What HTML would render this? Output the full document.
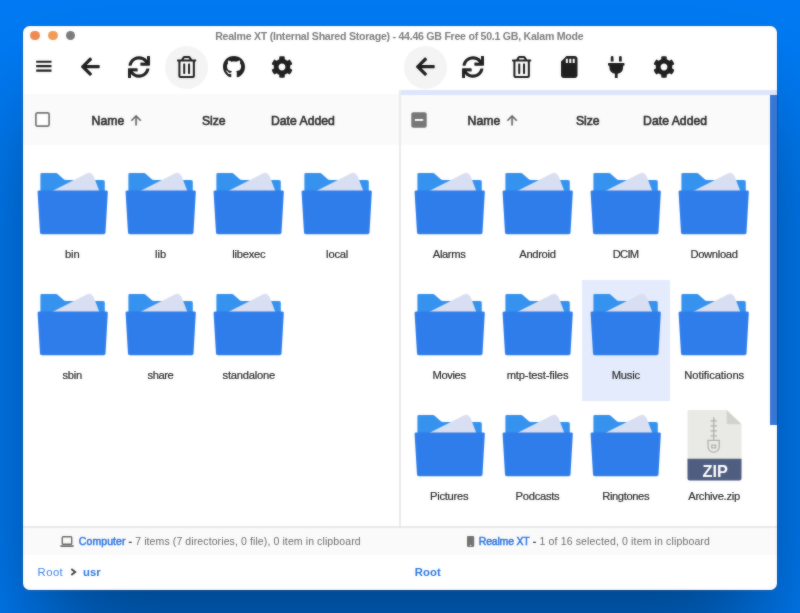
<!DOCTYPE html>
<html lang="en">
<head>
<meta charset="utf-8">
<title>Realme XT (Internal Shared Storage)</title>
<style>
*{box-sizing:border-box;margin:0;padding:0}
html,body{width:800px;height:613px;overflow:hidden}
body{position:relative;font-family:"Liberation Sans",sans-serif;background:#007af3;color:#333}
.win{position:absolute;left:22.9px;top:25.9px;width:753.65px;height:564.35px;background:#fff;border-radius:6.5px;box-shadow:0 71px 102px -11px rgba(0,0,0,.44),0 0 0 .6px rgba(0,20,60,.3)}
.abs, .ic, .circ, .sel, .lbl, .t{position:absolute}
.win>*{position:absolute}
.ic{display:block;overflow:visible}
.circ{width:43px;height:43px;border-radius:50%;background:#f4f4f4}
.sel{width:88.1px;height:121.2px;background:#e4ebfc}
.lbl{width:120px;text-align:center;font-size:11.2px;line-height:14px;color:#2d2d2d;white-space:nowrap;-webkit-text-stroke:.2px #2d2d2d}
.t{white-space:nowrap;line-height:1}
#stage{position:absolute;left:0;top:0;width:800px;height:613px;will-change:transform;filter:url(#soft)}
.dot{position:absolute;width:9.8px;height:9.8px;border-radius:50%;top:30.7px}
.title{position:absolute;top:30px;font-size:10.6px;font-weight:bold;color:#7e7e7e;line-height:12px;white-space:nowrap}
.hdr{position:absolute;background:#fafafa}
.hl{position:absolute;font-size:12.2px;color:#2e2e2e;line-height:14px;top:113.5px;white-space:nowrap;-webkit-text-stroke:.6px #2e2e2e}
.sb{position:absolute;top:525.8px;height:29.1px;background:#fafafa;border-top:2px solid #e9e9e9}
.st{position:absolute;top:535px;font-size:10.5px;line-height:13px;color:#6e6e6e;white-space:nowrap}
.st i{font-style:normal;color:#3c3c3c;-webkit-text-stroke:.4px #3c3c3c}
.st b{color:#3379e0;font-weight:normal;-webkit-text-stroke:.5px #3379e0}
.bc{position:absolute;top:564.6px;font-size:11.3px;line-height:14px;color:#3f85e4;white-space:nowrap}
.bc.b{font-weight:bold;color:#2f78e0}
</style>
</head>
<body>
<svg width="0" height="0" style="position:absolute" aria-hidden="true"><filter id="soft" x="0" y="0" width="100%" height="100%" color-interpolation-filters="sRGB"><feGaussianBlur in="SourceGraphic" stdDeviation="1" result="b"/><feComposite in="SourceGraphic" in2="b" operator="arithmetic" k1="0" k2="0.58" k3="0.42" k4="0"/></filter></svg>
<div id="stage">
<div class="win"></div>
<div class="dot" style="left:30.14px;background:#ee8a50"></div>
<div class="dot" style="left:47.82px;background:#f19b55"></div>
<div class="dot" style="left:65.5px;background:#797c7a"></div>
<div class="title" style="left:215.2px;"><span style="letter-spacing:-0.259px;margin-right:0.259px;">Realme XT (Internal Shared Storage) - 44.46 GB Free of 50.1 GB, Kalam Mode</span></div>

<div class="hdr" style="left:22.9px;width:376.3px;top:93.6px;height:51.6px"></div>
<div class="hdr" style="left:401px;width:368.6px;top:94.9px;height:50.3px"></div>
<div class="abs" style="left:399.4px;top:89.9px;width:377.15px;height:5px;background:#dce5fb"></div>
<div class="abs" style="left:399px;top:90px;width:2.1px;height:437px;background:#ebebeb"></div>
<div class="abs" style="left:769.5px;top:94.9px;width:7.05px;height:329.8px;background:#3876d3"></div>

<svg class="ic" style="left:34.6px;top:112.1px" width="15" height="15" viewBox="0 0 15 15"><rect x=".9" y=".9" width="13.2" height="13.2" rx="1.5" fill="#fff" stroke="#757575" stroke-width="1.7"/></svg>
<div class="hl" style="left:91.6px;"><span style="letter-spacing:0.071px;margin-right:-0.071px;">Name</span></div>
<svg class="ic" style="left:130.7px;top:115.2px" width="10.2" height="10.2" viewBox="4 4 16 16"><path fill="#666" stroke="#666" stroke-width=".7" d="M13 20h-2V8l-5.500 5.500-1.420-1.420L12 4.160l7.920 7.920-1.420 1.420L13 8z"/></svg>
<div class="hl" style="left:201.9px;"><span style="letter-spacing:-0.030px;margin-right:0.030px;">Size</span></div>
<div class="hl" style="left:270.9px;"><span style="letter-spacing:0.030px;margin-right:-0.030px;">Date Added</span></div>

<svg class="ic" style="left:411px;top:112px" width="16" height="16" viewBox="0 0 16 16"><rect x=".3" y=".3" width="15.400" height="15.400" rx="2" fill="#767676"/><rect x="3.800" y="7" width="8.400" height="1.900" fill="#fff"/></svg>
<div class="hl" style="left:467.6px;"><span style="letter-spacing:0.071px;margin-right:-0.071px;">Name</span></div>
<svg class="ic" style="left:506.7px;top:115.2px" width="10.2" height="10.2" viewBox="4 4 16 16"><path fill="#666" stroke="#666" stroke-width=".7" d="M13 20h-2V8l-5.500 5.500-1.420-1.420L12 4.160l7.920 7.920-1.420 1.420L13 8z"/></svg>
<div class="hl" style="left:575.9px;"><span style="letter-spacing:-0.030px;margin-right:0.030px;">Size</span></div>
<div class="hl" style="left:643.1px;"><span style="letter-spacing:0.030px;margin-right:-0.030px;">Date Added</span></div>

<svg class="ic" style="left:36.00px;top:60.30px" width="16" height="12" viewBox="0 0 16 12" preserveAspectRatio="none" ><path d="M.2 1.650h15.300M.2 6.100h15.300M.2 10.600h15.300" stroke="#1c1c1c" stroke-width="2.050" fill="none"/></svg>
<div class="circ" style="left:164.9px;top:45.7px"></div>
<svg class="ic" style="left:81.19px;top:56.00px" width="18.72" height="21.4" viewBox="0 0 448 512" preserveAspectRatio="none" ><path fill="#1f1f1f" d="M257.5 445.1l-22.2 22.2c-9.4 9.4-24.6 9.4-33.9 0L7 273c-9.4-9.4-9.4-24.6 0-33.9L201.4 44.7c9.4-9.4 24.6-9.4 33.9 0l22.2 22.2c9.5 9.5 9.3 25-.4 34.3L136.6 216H424c13.3 0 24 10.7 24 24v32c0 13.3-10.7 24-24 24H136.6l120.5 114.8c9.8 9.3 10 24.8.4 34.3z"/></svg>
<svg class="ic" style="left:127.60px;top:55.70px" width="22.0" height="22.0" viewBox="0 0 512 512" preserveAspectRatio="none" ><path fill="#1f1f1f" d="M440.65 12.57l4 82.77A247.16 247.16 0 0 0 255.83 8C134.73 8 33.91 94.92 12.29 209.82A12 12 0 0 0 24.09 224h49.05a12 12 0 0 0 11.67-9.26 175.91 175.91 0 0 1 317-56.94l-101.46-4.86a12 12 0 0 0-12.57 12v47.41a12 12 0 0 0 12 12H500a12 12 0 0 0 12-12V12a12 12 0 0 0-12-12h-47.37a12 12 0 0 0-11.98 12.57zM255.83 432a175.61 175.61 0 0 1-146-77.8l101.8 4.87a12 12 0 0 0 12.57-12v-47.4a12 12 0 0 0-12-12H12a12 12 0 0 0-12 12V500a12 12 0 0 0 12 12h47.35a12 12 0 0 0 12-12.6l-4.15-82.57A247.17 247.17 0 0 0 255.83 504c121.11 0 221.93-86.92 243.55-201.82a12 12 0 0 0-11.8-14.18h-49.05a12 12 0 0 0-11.67 9.26A175.86 175.86 0 0 1 255.83 432z"/></svg>
<svg class="ic" style="left:176.82px;top:55.70px" width="19.25" height="22.0" viewBox="0 0 448 512" preserveAspectRatio="none" ><path fill="#fdfdfd" d="M60 124h328v344H60z"/><path fill="#1f1f1f" d="M268 416h24a12 12 0 0 0 12-12V188a12 12 0 0 0-12-12h-24a12 12 0 0 0-12 12v216a12 12 0 0 0 12 12zM432 80h-82.410l-34-56.700A48 48 0 0 0 274.410 0H173.590a48 48 0 0 0-41.160 23.300L98.410 80H16A16 16 0 0 0 0 96v16a16 16 0 0 0 16 16h16v336a48 48 0 0 0 48 48h288a48 48 0 0 0 48-48V128h16a16 16 0 0 0 16-16V96a16 16 0 0 0-16-16zM171.840 50.910A6 6 0 0 1 177 48h94a6 6 0 0 1 5.150 2.910L293.610 80H154.390zM368 464H80V128h288zm-212-48h24a12 12 0 0 0 12-12V188a12 12 0 0 0-12-12h-24a12 12 0 0 0-12 12v216a12 12 0 0 0 12 12z"/></svg>
<svg class="ic" style="left:223.20px;top:55.80px" width="22" height="21.4" viewBox="8 8 496 484" preserveAspectRatio="none" ><path fill="#1f1f1f" d="M173.9 397.4c0 2-2.3 3.6-5.2 3.6-3.3.3-5.6-1.3-5.6-3.6 0-2 2.3-3.6 5.2-3.6 3-.3 5.6 1.3 5.6 3.6m-31.1-4.5c-.7 2 1.3 4.3 4.3 4.9 2.6 1 5.6 0 6.2-2s-1.3-4.3-4.3-5.2c-2.6-.7-5.5.3-6.2 2.3m44.2-1.7c-2.9.7-4.9 2.6-4.6 4.9.3 2 2.9 3.3 5.9 2.6 2.9-.7 4.9-2.6 4.6-4.6-.3-1.9-3-3.2-5.9-2.9M252.8 8C114.1 8 8 113.3 8 252c0 110.9 69.8 205.8 169.5 239.2 12.8 2.3 17.3-5.6 17.3-12.1 0-6.2-.3-40.4-.3-61.4 0 0-70 15-84.7-29.8 0 0-11.4-29.1-27.8-36.6 0 0-22.9-15.7 1.6-15.4 0 0 24.9 2 38.6 25.8 21.9 38.6 58.6 27.5 72.9 20.9 2.3-16 8.8-27.1 16-33.7-55.9-6.2-112.3-14.3-112.3-110.5 0-27.5 7.6-41.3 23.6-58.9-2.6-6.5-11.1-33.3 2.6-67.9 20.9-6.5 69 27 69 27 20-5.6 41.5-8.5 62.8-8.5s42.8 2.9 62.8 8.5c0 0 48.1-33.6 69-27 13.7 34.7 5.2 61.4 2.6 67.9 16 17.7 25.8 31.5 25.8 58.9 0 96.5-58.9 104.2-114.8 110.5 9.2 7.9 17 22.9 17 46.4 0 33.7-.3 75.4-.3 83.6 0 6.5 4.6 14.4 17.3 12.1C436.2 457.8 504 362.9 504 252 504 113.3 391.5 8 252.8 8M105.2 352.9c-1.3 1-1 3.3.7 5.2 1.6 1.6 3.9 2.3 5.2 1 1.3-1 1-3.3-.7-5.2-1.6-1.6-3.9-2.3-5.2-1m-10.8-8.1c-.7 1.3.3 2.9 2.3 3.9 1.6 1 3.6.7 4.3-.7.7-1.3-.3-2.9-2.3-3.9-2-.6-3.6-.3-4.3.7m32.4 35.6c-1.6 1.3-1 4.3 1.3 6.2 2.3 2.3 5.2 2.6 6.5 1 1.3-1.3.7-4.3-1.3-6.2-2.2-2.3-5.2-2.6-6.5-1m-11.4-14.7c-1.6 1-1.6 3.6 0 5.9s4.3 3.3 5.6 2.3c1.6-1.3 1.6-3.9 0-6.2-1.4-2.3-4-3.3-5.6-2"/></svg>
<svg class="ic" style="left:270.90px;top:56.00px" width="22.0" height="22.0" viewBox="0 0 512 512" preserveAspectRatio="none" ><path fill="#1f1f1f" d="M487.4 315.7l-42.6-24.6c4.3-23.2 4.3-47 0-70.2l42.6-24.6c4.9-2.8 7.1-8.6 5.5-14-11.1-35.6-30-67.8-54.7-94.6-3.8-4.1-10-5.1-14.8-2.3L380.8 110c-17.9-15.4-38.5-27.3-60.8-35.1V25.8c0-5.6-3.9-10.5-9.4-11.7-36.7-8.2-74.3-7.8-109.2 0-5.5 1.2-9.4 6.1-9.4 11.7V75c-22.2 7.9-42.8 19.8-60.8 35.1L88.7 85.5c-4.9-2.8-11-1.9-14.8 2.3-24.7 26.7-43.6 58.9-54.7 94.6-1.7 5.4.6 11.2 5.5 14L67.3 221c-4.3 23.2-4.3 47 0 70.2l-42.6 24.6c-4.9 2.8-7.1 8.6-5.5 14 11.1 35.6 30 67.8 54.7 94.6 3.8 4.1 10 5.1 14.8 2.3l42.6-24.6c17.9 15.4 38.5 27.3 60.8 35.1v49.2c0 5.6 3.9 10.5 9.4 11.7 36.7 8.2 74.3 7.8 109.2 0 5.5-1.2 9.4-6.1 9.4-11.7v-49.2c22.2-7.9 42.8-19.8 60.8-35.1l42.6 24.6c4.9 2.8 11 1.9 14.8-2.3 24.7-26.7 43.6-58.9 54.7-94.6 1.5-5.5-.7-11.3-5.6-14.1zM256 336c-44.1 0-80-35.9-80-80s35.9-80 80-80 80 35.9 80 80-35.9 80-80 80z"/></svg>
<div class="circ" style="left:404.1px;top:45.7px"></div>
<svg class="ic" style="left:415.99px;top:56.00px" width="18.72" height="21.4" viewBox="0 0 448 512" preserveAspectRatio="none" ><path fill="#1f1f1f" d="M257.5 445.1l-22.2 22.2c-9.4 9.4-24.6 9.4-33.9 0L7 273c-9.4-9.4-9.4-24.6 0-33.9L201.4 44.7c9.4-9.4 24.6-9.4 33.9 0l22.2 22.2c9.5 9.5 9.3 25-.4 34.3L136.6 216H424c13.3 0 24 10.7 24 24v32c0 13.3-10.7 24-24 24H136.6l120.5 114.8c9.8 9.3 10 24.8.4 34.3z"/></svg>
<svg class="ic" style="left:462.20px;top:55.70px" width="22.0" height="22.0" viewBox="0 0 512 512" preserveAspectRatio="none" ><path fill="#1f1f1f" d="M440.65 12.57l4 82.77A247.16 247.16 0 0 0 255.83 8C134.73 8 33.91 94.92 12.29 209.82A12 12 0 0 0 24.09 224h49.05a12 12 0 0 0 11.67-9.26 175.91 175.91 0 0 1 317-56.94l-101.46-4.86a12 12 0 0 0-12.57 12v47.41a12 12 0 0 0 12 12H500a12 12 0 0 0 12-12V12a12 12 0 0 0-12-12h-47.37a12 12 0 0 0-11.98 12.57zM255.83 432a175.61 175.61 0 0 1-146-77.8l101.8 4.87a12 12 0 0 0 12.57-12v-47.4a12 12 0 0 0-12-12H12a12 12 0 0 0-12 12V500a12 12 0 0 0 12 12h47.35a12 12 0 0 0 12-12.6l-4.15-82.57A247.17 247.17 0 0 0 255.83 504c121.11 0 221.93-86.92 243.55-201.82a12 12 0 0 0-11.8-14.18h-49.05a12 12 0 0 0-11.67 9.26A175.86 175.86 0 0 1 255.83 432z"/></svg>
<svg class="ic" style="left:511.67px;top:55.70px" width="19.25" height="22.0" viewBox="0 0 448 512" preserveAspectRatio="none" ><path fill="#fdfdfd" d="M60 124h328v344H60z"/><path fill="#1f1f1f" d="M268 416h24a12 12 0 0 0 12-12V188a12 12 0 0 0-12-12h-24a12 12 0 0 0-12 12v216a12 12 0 0 0 12 12zM432 80h-82.410l-34-56.700A48 48 0 0 0 274.410 0H173.590a48 48 0 0 0-41.160 23.300L98.410 80H16A16 16 0 0 0 0 96v16a16 16 0 0 0 16 16h16v336a48 48 0 0 0 48 48h288a48 48 0 0 0 48-48V128h16a16 16 0 0 0 16-16V96a16 16 0 0 0-16-16zM171.840 50.910A6 6 0 0 1 177 48h94a6 6 0 0 1 5.150 2.910L293.610 80H154.390zM368 464H80V128h288zm-212-48h24a12 12 0 0 0 12-12V188a12 12 0 0 0-12-12h-24a12 12 0 0 0-12 12v216a12 12 0 0 0 12 12z"/></svg>
<svg class="ic" style="left:560.55px;top:55.70px" width="16.5" height="22.0" viewBox="0 0 384 512" preserveAspectRatio="none" ><path fill="#1f1f1f" d="M320 0H128L0 128v320c0 35.3 28.7 64 64 64h256c35.3 0 64-28.7 64-64V64c0-35.3-28.7-64-64-64zM160 160h-48V64h48v96zm80 0h-48V64h48v96zm80 0h-48V64h48v96z"/></svg>
<svg class="ic" style="left:608.25px;top:55.70px" width="16.5" height="22.0" viewBox="0 0 384 512" preserveAspectRatio="none" ><path fill="#1f1f1f" d="M320 32a32 32 0 0 0-64 0v96h64zm48 128H16a16 16 0 0 0-16 16v32a16 16 0 0 0 16 16h16v32a160.07 160.07 0 0 0 128 156.8V512h64v-99.2A160.07 160.07 0 0 0 352 256v-32h16a16 16 0 0 0 16-16v-32a16 16 0 0 0-16-16zM128 32a32 32 0 0 0-64 0v96h64z"/></svg>
<svg class="ic" style="left:653.20px;top:56.00px" width="22.0" height="22.0" viewBox="0 0 512 512" preserveAspectRatio="none" ><path fill="#1f1f1f" d="M487.4 315.7l-42.6-24.6c4.3-23.2 4.3-47 0-70.2l42.6-24.6c4.9-2.8 7.1-8.6 5.5-14-11.1-35.6-30-67.8-54.7-94.6-3.8-4.1-10-5.1-14.8-2.3L380.8 110c-17.9-15.4-38.5-27.3-60.8-35.1V25.8c0-5.6-3.9-10.5-9.4-11.7-36.7-8.2-74.3-7.8-109.2 0-5.5 1.2-9.4 6.1-9.4 11.7V75c-22.2 7.9-42.8 19.8-60.8 35.1L88.7 85.5c-4.9-2.8-11-1.9-14.8 2.3-24.7 26.7-43.6 58.9-54.7 94.6-1.7 5.4.6 11.2 5.5 14L67.3 221c-4.3 23.2-4.3 47 0 70.2l-42.6 24.6c-4.9 2.8-7.1 8.6-5.5 14 11.1 35.6 30 67.8 54.7 94.6 3.8 4.1 10 5.1 14.8 2.3l42.6-24.6c17.9 15.4 38.5 27.3 60.8 35.1v49.2c0 5.6 3.9 10.5 9.4 11.7 36.7 8.2 74.3 7.8 109.2 0 5.5-1.2 9.4-6.1 9.4-11.7v-49.2c22.2-7.9 42.8-19.8 60.8-35.1l42.6 24.6c4.9 2.8 11 1.9 14.8-2.3 24.7-26.7 43.6-58.9 54.7-94.6 1.5-5.5-.7-11.3-5.6-14.1zM256 336c-44.1 0-80-35.9-80-80s35.9-80 80-80 80 35.9 80 80-35.9 80-80 80z"/></svg>
<svg class="ic" style="left:36.50px;top:172.10px" width="71" height="63" viewBox="0 0 71 63">
<path fill="#3592ee" d="M3.400 2.400a1.400 1.400 0 0 1 1.400-1.400h14a3 3 0 0 1 2.100.9l5.900 5.300a3 3 0 0 0 2.100.8h37.100a1.800 1.800 0 0 1 1.800 1.800V21H3.400z"/>
<path fill="#d9dff2" d="M14.200 19.500 50.200 1.300c1.500-.8 2.900-.7 4.100.1 1.200.8 2 1.800 2.600 3.300l5.600 14.800z"/>
<path fill="#2f7deb" d="M2.200 18.400h67a1.600 1.600 0 0 1 1.600 1.800L68.500 60.500a1.800 1.800 0 0 1-1.800 1.700H4.800a1.800 1.800 0 0 1-1.800-1.700L.6 20.200a1.600 1.600 0 0 1 1.600-1.800z"/>
</svg>
<div class="lbl" style="left:12.30px;top:247.3px;"><span style="letter-spacing:-0.113px;margin-right:0.113px;">bin</span></div>
<svg class="ic" style="left:124.80px;top:172.10px" width="71" height="63" viewBox="0 0 71 63">
<path fill="#3592ee" d="M3.400 2.400a1.400 1.400 0 0 1 1.400-1.400h14a3 3 0 0 1 2.100.9l5.900 5.300a3 3 0 0 0 2.100.8h37.100a1.800 1.800 0 0 1 1.800 1.800V21H3.400z"/>
<path fill="#d9dff2" d="M14.200 19.500 50.200 1.300c1.500-.8 2.900-.7 4.100.1 1.200.8 2 1.800 2.600 3.300l5.600 14.800z"/>
<path fill="#2f7deb" d="M2.200 18.400h67a1.600 1.600 0 0 1 1.600 1.800L68.500 60.500a1.800 1.800 0 0 1-1.800 1.700H4.800a1.800 1.800 0 0 1-1.800-1.700L.6 20.200a1.600 1.600 0 0 1 1.600-1.800z"/>
</svg>
<div class="lbl" style="left:100.60px;top:247.3px;"><span style="letter-spacing:-0.068px;margin-right:0.068px;">lib</span></div>
<svg class="ic" style="left:213.10px;top:172.10px" width="71" height="63" viewBox="0 0 71 63">
<path fill="#3592ee" d="M3.400 2.400a1.400 1.400 0 0 1 1.400-1.400h14a3 3 0 0 1 2.100.9l5.900 5.300a3 3 0 0 0 2.100.8h37.100a1.800 1.800 0 0 1 1.800 1.800V21H3.400z"/>
<path fill="#d9dff2" d="M14.200 19.500 50.200 1.300c1.500-.8 2.900-.7 4.100.1 1.200.8 2 1.800 2.600 3.300l5.600 14.800z"/>
<path fill="#2f7deb" d="M2.200 18.400h67a1.600 1.600 0 0 1 1.600 1.800L68.500 60.500a1.800 1.800 0 0 1-1.800 1.700H4.800a1.800 1.800 0 0 1-1.800-1.700L.6 20.200a1.600 1.600 0 0 1 1.600-1.800z"/>
</svg>
<div class="lbl" style="left:188.90px;top:247.3px;"><span style="letter-spacing:-0.261px;margin-right:0.261px;">libexec</span></div>
<svg class="ic" style="left:301.40px;top:172.10px" width="71" height="63" viewBox="0 0 71 63">
<path fill="#3592ee" d="M3.400 2.400a1.400 1.400 0 0 1 1.400-1.400h14a3 3 0 0 1 2.100.9l5.900 5.300a3 3 0 0 0 2.100.8h37.100a1.800 1.800 0 0 1 1.800 1.800V21H3.400z"/>
<path fill="#d9dff2" d="M14.200 19.500 50.200 1.300c1.500-.8 2.900-.7 4.100.1 1.200.8 2 1.800 2.600 3.300l5.600 14.800z"/>
<path fill="#2f7deb" d="M2.200 18.400h67a1.600 1.600 0 0 1 1.600 1.800L68.500 60.500a1.800 1.800 0 0 1-1.800 1.700H4.800a1.800 1.800 0 0 1-1.800-1.700L.6 20.200a1.600 1.600 0 0 1 1.600-1.800z"/>
</svg>
<div class="lbl" style="left:277.20px;top:247.3px;"><span style="letter-spacing:-0.203px;margin-right:0.203px;">local</span></div>
<svg class="ic" style="left:36.50px;top:292.80px" width="71" height="63" viewBox="0 0 71 63">
<path fill="#3592ee" d="M3.400 2.400a1.400 1.400 0 0 1 1.400-1.400h14a3 3 0 0 1 2.100.9l5.900 5.300a3 3 0 0 0 2.100.8h37.100a1.800 1.800 0 0 1 1.800 1.800V21H3.400z"/>
<path fill="#d9dff2" d="M14.200 19.500 50.200 1.300c1.500-.8 2.900-.7 4.100.1 1.200.8 2 1.800 2.600 3.300l5.600 14.800z"/>
<path fill="#2f7deb" d="M2.200 18.400h67a1.600 1.600 0 0 1 1.600 1.800L68.500 60.500a1.800 1.800 0 0 1-1.800 1.700H4.800a1.800 1.800 0 0 1-1.800-1.700L.6 20.200a1.600 1.600 0 0 1 1.600-1.800z"/>
</svg>
<div class="lbl" style="left:12.30px;top:368.2px;"><span style="letter-spacing:-0.283px;margin-right:0.283px;">sbin</span></div>
<svg class="ic" style="left:124.80px;top:292.80px" width="71" height="63" viewBox="0 0 71 63">
<path fill="#3592ee" d="M3.400 2.400a1.400 1.400 0 0 1 1.400-1.400h14a3 3 0 0 1 2.100.9l5.900 5.300a3 3 0 0 0 2.100.8h37.100a1.800 1.800 0 0 1 1.800 1.800V21H3.400z"/>
<path fill="#d9dff2" d="M14.200 19.500 50.200 1.300c1.500-.8 2.900-.7 4.100.1 1.200.8 2 1.800 2.600 3.300l5.600 14.800z"/>
<path fill="#2f7deb" d="M2.200 18.400h67a1.600 1.600 0 0 1 1.600 1.800L68.500 60.500a1.800 1.800 0 0 1-1.800 1.700H4.800a1.800 1.800 0 0 1-1.800-1.700L.6 20.200a1.600 1.600 0 0 1 1.600-1.800z"/>
</svg>
<div class="lbl" style="left:100.60px;top:368.2px;"><span style="letter-spacing:-0.460px;margin-right:0.460px;">share</span></div>
<svg class="ic" style="left:213.10px;top:292.80px" width="71" height="63" viewBox="0 0 71 63">
<path fill="#3592ee" d="M3.400 2.400a1.400 1.400 0 0 1 1.400-1.400h14a3 3 0 0 1 2.100.9l5.900 5.300a3 3 0 0 0 2.100.8h37.100a1.800 1.800 0 0 1 1.800 1.800V21H3.400z"/>
<path fill="#d9dff2" d="M14.200 19.500 50.200 1.300c1.500-.8 2.900-.7 4.100.1 1.200.8 2 1.800 2.600 3.300l5.600 14.800z"/>
<path fill="#2f7deb" d="M2.200 18.400h67a1.600 1.600 0 0 1 1.600 1.800L68.500 60.500a1.800 1.800 0 0 1-1.800 1.700H4.800a1.800 1.800 0 0 1-1.800-1.700L.6 20.200a1.600 1.600 0 0 1 1.600-1.800z"/>
</svg>
<div class="lbl" style="left:188.90px;top:368.2px;"><span style="letter-spacing:-0.235px;margin-right:0.235px;">standalone</span></div>
<svg class="ic" style="left:413.50px;top:172.10px" width="71" height="63" viewBox="0 0 71 63">
<path fill="#3592ee" d="M3.400 2.400a1.400 1.400 0 0 1 1.400-1.400h14a3 3 0 0 1 2.100.9l5.900 5.300a3 3 0 0 0 2.100.8h37.100a1.800 1.800 0 0 1 1.800 1.800V21H3.400z"/>
<path fill="#d9dff2" d="M14.200 19.500 50.200 1.300c1.500-.8 2.900-.7 4.100.1 1.200.8 2 1.800 2.600 3.300l5.600 14.800z"/>
<path fill="#2f7deb" d="M2.200 18.400h67a1.600 1.600 0 0 1 1.600 1.800L68.500 60.500a1.800 1.800 0 0 1-1.800 1.700H4.800a1.800 1.800 0 0 1-1.800-1.700L.6 20.200a1.600 1.600 0 0 1 1.600-1.800z"/>
</svg>
<div class="lbl" style="left:389.30px;top:247.3px;"><span style="letter-spacing:-0.369px;margin-right:0.369px;">Alarms</span></div>
<svg class="ic" style="left:501.80px;top:172.10px" width="71" height="63" viewBox="0 0 71 63">
<path fill="#3592ee" d="M3.400 2.400a1.400 1.400 0 0 1 1.400-1.400h14a3 3 0 0 1 2.100.9l5.900 5.300a3 3 0 0 0 2.100.8h37.100a1.800 1.800 0 0 1 1.800 1.800V21H3.400z"/>
<path fill="#d9dff2" d="M14.200 19.500 50.200 1.300c1.500-.8 2.900-.7 4.100.1 1.200.8 2 1.800 2.600 3.300l5.600 14.800z"/>
<path fill="#2f7deb" d="M2.200 18.400h67a1.600 1.600 0 0 1 1.600 1.800L68.500 60.500a1.800 1.800 0 0 1-1.800 1.700H4.800a1.800 1.800 0 0 1-1.800-1.700L.6 20.200a1.600 1.600 0 0 1 1.600-1.800z"/>
</svg>
<div class="lbl" style="left:477.60px;top:247.3px;"><span style="letter-spacing:-0.323px;margin-right:0.323px;">Android</span></div>
<svg class="ic" style="left:590.10px;top:172.10px" width="71" height="63" viewBox="0 0 71 63">
<path fill="#3592ee" d="M3.400 2.400a1.400 1.400 0 0 1 1.400-1.400h14a3 3 0 0 1 2.100.9l5.900 5.300a3 3 0 0 0 2.100.8h37.100a1.800 1.800 0 0 1 1.800 1.800V21H3.400z"/>
<path fill="#d9dff2" d="M14.200 19.500 50.200 1.300c1.500-.8 2.900-.7 4.100.1 1.200.8 2 1.800 2.600 3.300l5.600 14.800z"/>
<path fill="#2f7deb" d="M2.200 18.400h67a1.600 1.600 0 0 1 1.600 1.800L68.500 60.500a1.800 1.800 0 0 1-1.800 1.700H4.800a1.800 1.800 0 0 1-1.800-1.700L.6 20.200a1.600 1.600 0 0 1 1.600-1.800z"/>
</svg>
<div class="lbl" style="left:565.90px;top:247.3px;"><span style="letter-spacing:-0.723px;margin-right:0.723px;">DCIM</span></div>
<svg class="ic" style="left:678.40px;top:172.10px" width="71" height="63" viewBox="0 0 71 63">
<path fill="#3592ee" d="M3.400 2.400a1.400 1.400 0 0 1 1.400-1.400h14a3 3 0 0 1 2.100.9l5.900 5.300a3 3 0 0 0 2.100.8h37.100a1.800 1.800 0 0 1 1.800 1.800V21H3.400z"/>
<path fill="#d9dff2" d="M14.200 19.500 50.200 1.300c1.500-.8 2.900-.7 4.100.1 1.200.8 2 1.800 2.600 3.300l5.600 14.800z"/>
<path fill="#2f7deb" d="M2.200 18.400h67a1.600 1.600 0 0 1 1.600 1.800L68.500 60.500a1.800 1.800 0 0 1-1.800 1.700H4.800a1.800 1.800 0 0 1-1.800-1.700L.6 20.200a1.600 1.600 0 0 1 1.600-1.800z"/>
</svg>
<div class="lbl" style="left:654.20px;top:247.3px;"><span style="letter-spacing:-0.333px;margin-right:0.333px;">Download</span></div>
<svg class="ic" style="left:413.50px;top:292.80px" width="71" height="63" viewBox="0 0 71 63">
<path fill="#3592ee" d="M3.400 2.400a1.400 1.400 0 0 1 1.400-1.400h14a3 3 0 0 1 2.100.9l5.900 5.300a3 3 0 0 0 2.100.8h37.100a1.800 1.800 0 0 1 1.800 1.800V21H3.400z"/>
<path fill="#d9dff2" d="M14.200 19.500 50.200 1.300c1.500-.8 2.900-.7 4.100.1 1.200.8 2 1.800 2.600 3.300l5.600 14.800z"/>
<path fill="#2f7deb" d="M2.200 18.400h67a1.600 1.600 0 0 1 1.600 1.800L68.500 60.500a1.800 1.800 0 0 1-1.800 1.700H4.800a1.800 1.800 0 0 1-1.800-1.700L.6 20.200a1.600 1.600 0 0 1 1.600-1.800z"/>
</svg>
<div class="lbl" style="left:389.30px;top:368.2px;"><span style="letter-spacing:-0.406px;margin-right:0.406px;">Movies</span></div>
<svg class="ic" style="left:501.80px;top:292.80px" width="71" height="63" viewBox="0 0 71 63">
<path fill="#3592ee" d="M3.400 2.400a1.400 1.400 0 0 1 1.400-1.400h14a3 3 0 0 1 2.100.9l5.900 5.300a3 3 0 0 0 2.100.8h37.100a1.800 1.800 0 0 1 1.800 1.800V21H3.400z"/>
<path fill="#d9dff2" d="M14.200 19.500 50.200 1.300c1.500-.8 2.900-.7 4.100.1 1.200.8 2 1.800 2.600 3.300l5.600 14.800z"/>
<path fill="#2f7deb" d="M2.200 18.400h67a1.600 1.600 0 0 1 1.600 1.800L68.500 60.500a1.800 1.800 0 0 1-1.800 1.700H4.800a1.800 1.800 0 0 1-1.800-1.700L.6 20.200a1.600 1.600 0 0 1 1.600-1.800z"/>
</svg>
<div class="lbl" style="left:477.60px;top:368.2px;"><span style="letter-spacing:-0.174px;margin-right:0.174px;">mtp-test-files</span></div>
<div class="sel" style="left:581.70px;top:279.8px"></div>
<svg class="ic" style="left:590.10px;top:292.80px" width="71" height="63" viewBox="0 0 71 63">
<path fill="#3592ee" d="M3.400 2.400a1.400 1.400 0 0 1 1.400-1.400h14a3 3 0 0 1 2.100.9l5.900 5.300a3 3 0 0 0 2.100.8h37.100a1.800 1.800 0 0 1 1.800 1.800V21H3.400z"/>
<path fill="#d9dff2" d="M14.200 19.500 50.200 1.300c1.500-.8 2.900-.7 4.100.1 1.200.8 2 1.800 2.600 3.300l5.600 14.800z"/>
<path fill="#2f7deb" d="M2.200 18.400h67a1.600 1.600 0 0 1 1.600 1.800L68.500 60.500a1.800 1.800 0 0 1-1.800 1.700H4.800a1.800 1.800 0 0 1-1.800-1.700L.6 20.200a1.600 1.600 0 0 1 1.600-1.800z"/>
</svg>
<div class="lbl" style="left:565.90px;top:368.2px;"><span style="letter-spacing:-0.204px;margin-right:0.204px;">Music</span></div>
<svg class="ic" style="left:678.40px;top:292.80px" width="71" height="63" viewBox="0 0 71 63">
<path fill="#3592ee" d="M3.400 2.400a1.400 1.400 0 0 1 1.400-1.400h14a3 3 0 0 1 2.100.9l5.900 5.300a3 3 0 0 0 2.100.8h37.100a1.800 1.800 0 0 1 1.800 1.800V21H3.400z"/>
<path fill="#d9dff2" d="M14.200 19.500 50.200 1.300c1.500-.8 2.900-.7 4.100.1 1.200.8 2 1.800 2.600 3.300l5.600 14.800z"/>
<path fill="#2f7deb" d="M2.200 18.400h67a1.600 1.600 0 0 1 1.600 1.800L68.500 60.500a1.800 1.800 0 0 1-1.800 1.700H4.800a1.800 1.800 0 0 1-1.800-1.700L.6 20.200a1.600 1.600 0 0 1 1.600-1.800z"/>
</svg>
<div class="lbl" style="left:654.20px;top:368.2px;"><span style="letter-spacing:-0.088px;margin-right:0.088px;">Notifications</span></div>
<svg class="ic" style="left:413.50px;top:413.50px" width="71" height="63" viewBox="0 0 71 63">
<path fill="#3592ee" d="M3.400 2.400a1.400 1.400 0 0 1 1.400-1.400h14a3 3 0 0 1 2.100.9l5.900 5.300a3 3 0 0 0 2.100.8h37.100a1.800 1.800 0 0 1 1.800 1.800V21H3.400z"/>
<path fill="#d9dff2" d="M14.200 19.500 50.200 1.300c1.500-.8 2.900-.7 4.100.1 1.200.8 2 1.800 2.600 3.300l5.600 14.800z"/>
<path fill="#2f7deb" d="M2.200 18.400h67a1.600 1.600 0 0 1 1.600 1.800L68.500 60.500a1.800 1.800 0 0 1-1.800 1.700H4.800a1.800 1.800 0 0 1-1.800-1.700L.6 20.200a1.600 1.600 0 0 1 1.600-1.800z"/>
</svg>
<div class="lbl" style="left:389.30px;top:489.1px;"><span style="letter-spacing:-0.290px;margin-right:0.290px;">Pictures</span></div>
<svg class="ic" style="left:501.80px;top:413.50px" width="71" height="63" viewBox="0 0 71 63">
<path fill="#3592ee" d="M3.400 2.400a1.400 1.400 0 0 1 1.400-1.400h14a3 3 0 0 1 2.100.9l5.900 5.300a3 3 0 0 0 2.100.8h37.100a1.800 1.800 0 0 1 1.800 1.800V21H3.400z"/>
<path fill="#d9dff2" d="M14.200 19.500 50.200 1.300c1.500-.8 2.900-.7 4.100.1 1.200.8 2 1.800 2.600 3.300l5.600 14.800z"/>
<path fill="#2f7deb" d="M2.200 18.400h67a1.600 1.600 0 0 1 1.600 1.800L68.500 60.500a1.800 1.800 0 0 1-1.800 1.700H4.800a1.800 1.800 0 0 1-1.800-1.700L.6 20.200a1.600 1.600 0 0 1 1.600-1.800z"/>
</svg>
<div class="lbl" style="left:477.60px;top:489.1px;"><span style="letter-spacing:-0.279px;margin-right:0.279px;">Podcasts</span></div>
<svg class="ic" style="left:590.10px;top:413.50px" width="71" height="63" viewBox="0 0 71 63">
<path fill="#3592ee" d="M3.400 2.400a1.400 1.400 0 0 1 1.400-1.400h14a3 3 0 0 1 2.100.9l5.900 5.300a3 3 0 0 0 2.100.8h37.100a1.800 1.800 0 0 1 1.800 1.800V21H3.400z"/>
<path fill="#d9dff2" d="M14.200 19.500 50.200 1.300c1.500-.8 2.900-.7 4.100.1 1.200.8 2 1.800 2.600 3.300l5.600 14.800z"/>
<path fill="#2f7deb" d="M2.200 18.400h67a1.600 1.600 0 0 1 1.600 1.800L68.500 60.500a1.800 1.800 0 0 1-1.800 1.700H4.800a1.800 1.800 0 0 1-1.800-1.700L.6 20.200a1.600 1.600 0 0 1 1.600-1.800z"/>
</svg>
<div class="lbl" style="left:565.90px;top:489.1px;"><span style="letter-spacing:-0.388px;margin-right:0.388px;">Ringtones</span></div>
<svg class="ic" style="left:686.60px;top:410.10px" width="55" height="71" viewBox="0 0 55 71">
<path fill="#e9e9e5" d="M2 0h37.700L54.500 14.300V60H.5V1.500A1.500 1.500 0 0 1 2 0z"/>
<path fill="#d2d2cd" d="M39.700 0 54.500 14.300H41.200a1.500 1.500 0 0 1-1.500-1.500z"/>
<g fill="none" stroke="#b1b1ae" stroke-width="1.300"><path d="M26.700 7.300v23M23.500 10.800h6.400M23.500 15.800h6.400M23.500 20.800h6.400M23.500 25.800h6.400"/><path d="M21.100 30.300h11.200v6.400a5.600 5.600 0 0 1-11.200 0z"/><path d="M24.800 35.200h3.800v2.600h-3.800z"/></g>
<path fill="#4f5d80" d="M.5 48.800h54V68.400a2 2 0 0 1-2 2H2.500a2 2 0 0 1-2-2z"/>
<text x="28.200" y="66.500" text-anchor="middle" font-family="'Liberation Sans',sans-serif" font-weight="bold" font-size="17.300" fill="#fff" textLength="25.400" lengthAdjust="spacingAndGlyphs">ZIP</text>
</svg>
<div class="lbl" style="left:654.20px;top:489.1px;"><span style="letter-spacing:-0.274px;margin-right:0.274px;">Archive.zip</span></div>

<div class="sb" style="left:22.9px;width:376.3px"></div>
<div class="sb" style="left:399px;width:377.55px"></div>
<svg class="ic" style="left:60.2px;top:535.6px" width="14" height="11" viewBox="0 0 14 11"><rect x="2.300" y=".8" width="9.400" height="7.400" rx=".8" fill="none" stroke="#6c6c6c" stroke-width="1.400"/><path d="M.2 9.300h13.600v.4a1.200 1.200 0 0 1-1.200 1.200H1.400A1.200 1.200 0 0 1 .2 9.700z" fill="#6c6c6c"/></svg>
<div class="st" style="left:78.8px"><b style="letter-spacing:0.086px;margin-right:-0.086px;">Computer</b><span style="letter-spacing:0.106px;margin-right:-0.106px;"><i> - </i>7 items (7 directories, 0 file), 0 item in clipboard</span></div>
<svg class="ic" style="left:467px;top:535.8px" width="7.200" height="10.900" viewBox="0 0 7.200 10.900"><rect x="0" y="0" width="7.200" height="10.900" rx="1.100" fill="#727272"/><circle cx="3.600" cy="9.500" r=".8" fill="#e6e6e6"/></svg>
<div class="st" style="left:478.8px"><b style="letter-spacing:-0.192px;margin-right:0.192px;">Realme XT</b><span style="letter-spacing:0.142px;margin-right:-0.142px;"><i> - </i>1 of 16 selected, 0 item in clipboard</span></div>

<div class="bc" style="left:37.6px;"><span style="letter-spacing:0.431px;margin-right:-0.431px;">Root</span></div>
<svg class="ic" style="left:69.5px;top:566.6px" width="7" height="10" viewBox="0 0 7 10"><path d="M1.300 1.900 5.200 5 1.300 8.100" fill="none" stroke="#444" stroke-width="1.900"/></svg>
<div class="bc b" style="left:83.1px;"><span style="letter-spacing:0.002px;margin-right:-0.002px;">usr</span></div>
<div class="bc b" style="left:414.8px;"><span style="letter-spacing:0.066px;margin-right:-0.066px;">Root</span></div>
</div>
</body>
</html>
